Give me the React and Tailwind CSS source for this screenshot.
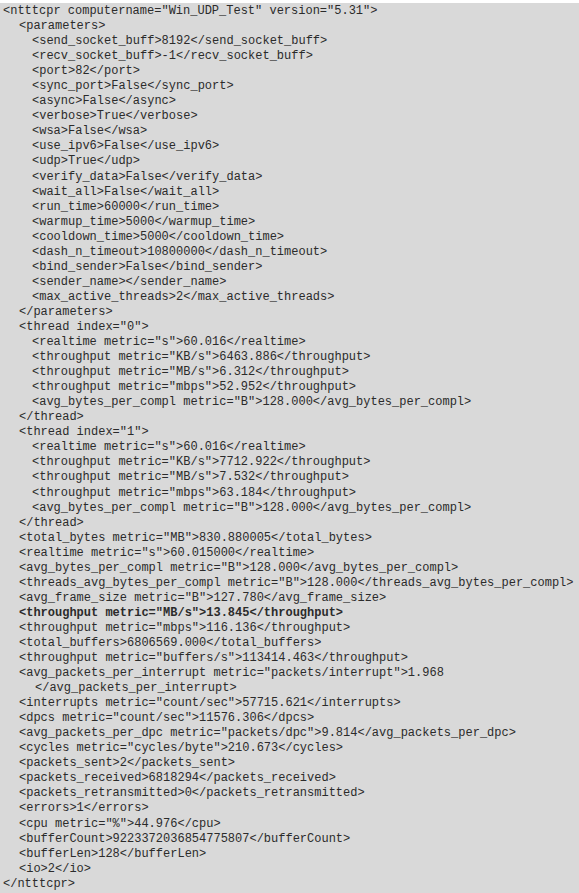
const lines = [
  [0, '<ntttcpr computername="Win_UDP_Test" version="5.31">'],
  [1, "<parameters>"],
  [2, "<send_socket_buff>8192</send_socket_buff>"],
  [2, "<recv_socket_buff>-1</recv_socket_buff>"],
  [2, "<port>82</port>"],
  [2, "<sync_port>False</sync_port>"],
  [2, "<async>False</async>"],
  [2, "<verbose>True</verbose>"],
  [2, "<wsa>False</wsa>"],
  [2, "<use_ipv6>False</use_ipv6>"],
  [2, "<udp>True</udp>"],
  [2, "<verify_data>False</verify_data>"],
  [2, "<wait_all>False</wait_all>"],
  [2, "<run_time>60000</run_time>"],
  [2, "<warmup_time>5000</warmup_time>"],
  [2, "<cooldown_time>5000</cooldown_time>"],
  [2, "<dash_n_timeout>10800000</dash_n_timeout>"],
  [2, "<bind_sender>False</bind_sender>"],
  [2, "<sender_name></sender_name>"],
  [2, "<max_active_threads>2</max_active_threads>"],
  [1, "</parameters>"],
  [1, '<thread index="0">'],
  [2, '<realtime metric="s">60.016</realtime>'],
  [2, '<throughput metric="KB/s">6463.886</throughput>'],
  [2, '<throughput metric="MB/s">6.312</throughput>'],
  [2, '<throughput metric="mbps">52.952</throughput>'],
  [2, '<avg_bytes_per_compl metric="B">128.000</avg_bytes_per_compl>'],
  [1, "</thread>"],
  [1, '<thread index="1">'],
  [2, '<realtime metric="s">60.016</realtime>'],
  [2, '<throughput metric="KB/s">7712.922</throughput>'],
  [2, '<throughput metric="MB/s">7.532</throughput>'],
  [2, '<throughput metric="mbps">63.184</throughput>'],
  [2, '<avg_bytes_per_compl metric="B">128.000</avg_bytes_per_compl>'],
  [1, "</thread>"],
  [1, '<total_bytes metric="MB">830.880005</total_bytes>'],
  [1, '<realtime metric="s">60.015000</realtime>'],
  [1, '<avg_bytes_per_compl metric="B">128.000</avg_bytes_per_compl>'],
  [1, '<threads_avg_bytes_per_compl metric="B">128.000</threads_avg_bytes_per_compl>'],
  [1, '<avg_frame_size metric="B">127.780</avg_frame_size>'],
  [1, '<throughput metric="MB/s">13.845</throughput>', true],
  [1, '<throughput metric="mbps">116.136</throughput>'],
  [1, "<total_buffers>6806569.000</total_buffers>"],
  [1, '<throughput metric="buffers/s">113414.463</throughput>'],
  [1, '<avg_packets_per_interrupt metric="packets/interrupt">1.968'],
  [3, "</avg_packets_per_interrupt>"],
  [1, '<interrupts metric="count/sec">57715.621</interrupts>'],
  [1, '<dpcs metric="count/sec">11576.306</dpcs>'],
  [1, '<avg_packets_per_dpc metric="packets/dpc">9.814</avg_packets_per_dpc>'],
  [1, '<cycles metric="cycles/byte">210.673</cycles>'],
  [1, "<packets_sent>2</packets_sent>"],
  [1, "<packets_received>6818294</packets_received>"],
  [1, "<packets_retransmitted>0</packets_retransmitted>"],
  [1, "<errors>1</errors>"],
  [1, '<cpu metric="%">44.976</cpu>'],
  [1, "<bufferCount>9223372036854775807</bufferCount>"],
  [1, "<bufferLen>128</bufferLen>"],
  [1, "<io>2</io>"],
  [0, "</ntttcpr>"],
];

// indent offsets in px, measured from the shot
const indent = ["ml-0", "ml-[16px]", "ml-[29px]", "ml-[32px]"];

export default function App() {
  return (
    <div className="w-[579px] h-[893px] bg-white pt-[3px] overflow-hidden">
      <div className="h-full bg-[#d9d9d9] pt-[1px] pl-[3px] font-mono text-[12px] leading-[15.05px] text-[#2b2b2b]">
        {lines.map(([lvl, text, bold], i) => (
          <div key={i} className={`whitespace-pre ${indent[lvl]} ${bold ? "font-bold" : ""}`}>
            {text}
          </div>
        ))}
      </div>
    </div>
  );
}
